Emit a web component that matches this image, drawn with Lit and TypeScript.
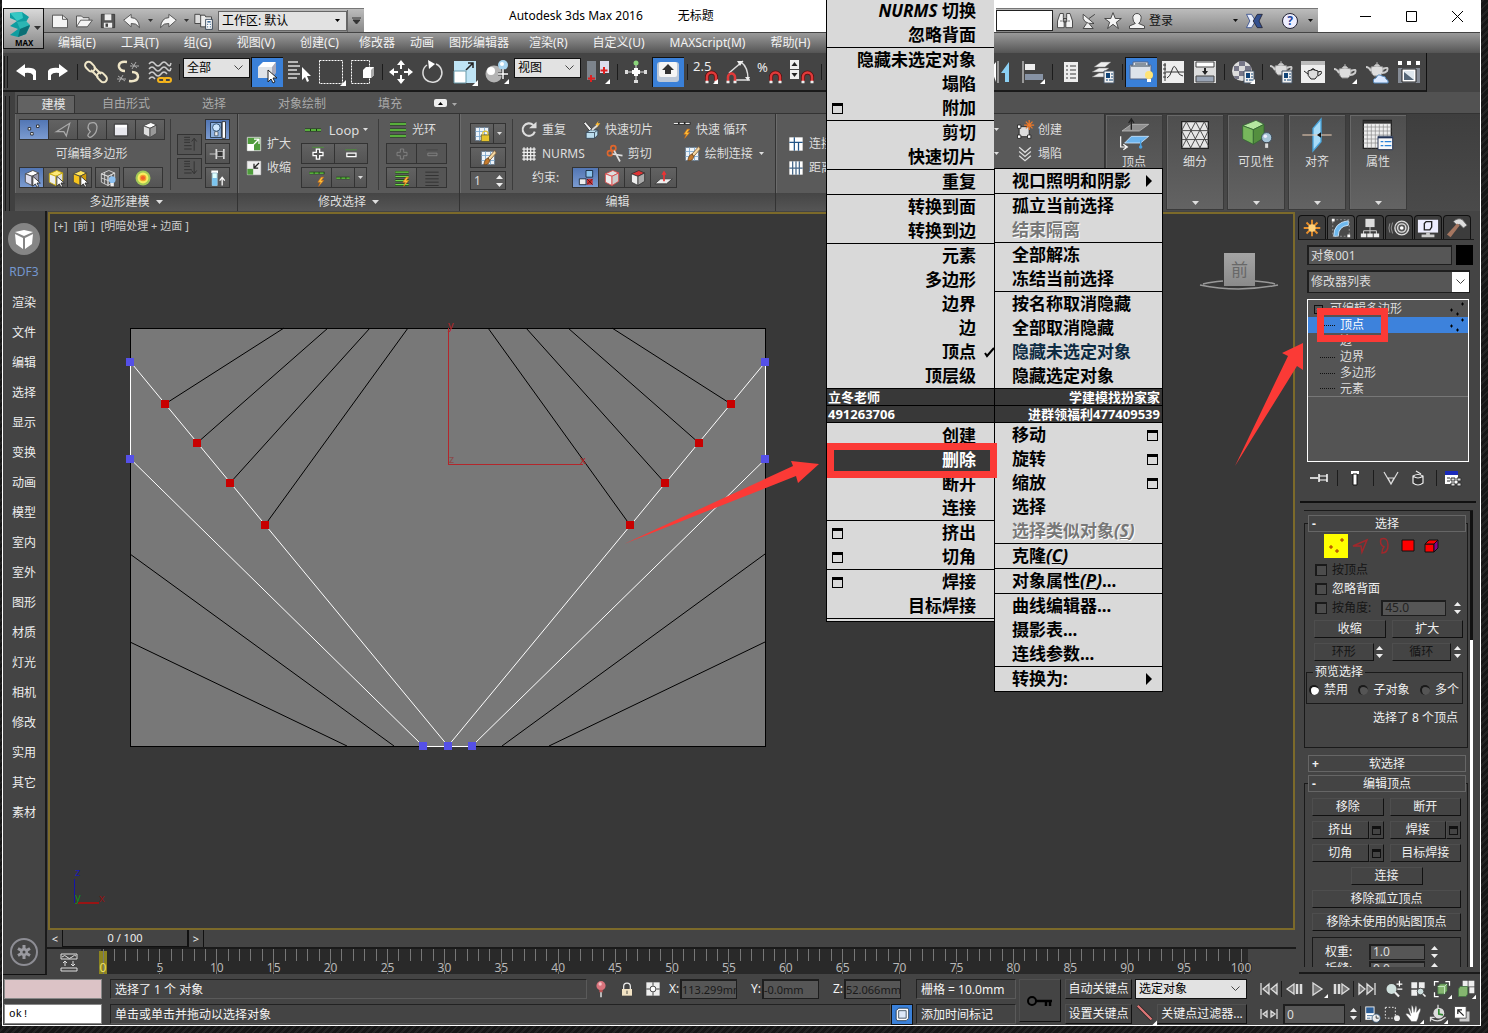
import { LitElement, html, css, svg, nothing } from "lit";
import { customElement } from "lit/decorators.js";
import { classMap } from "lit/directives/class-map.js";

/* ---------- icon drawings on a 24 x 24 grid ---------- */
const magnet = svg`<path d="M13 21v-4a4.500 4.500 0 0 1 9 0v4" fill="none" stroke="#5a1010" stroke-width="4"/><path d="M13 21v-4a4.500 4.500 0 0 1 9 0v4" fill="none" stroke="#e03a3a" stroke-width="2.500"/><path d="M11.500 22h3M20.500 22h3" stroke="#eee" stroke-width="2.500"/>`;
const fly = svg`<path d="M24 19v5h-5z" fill="#fff"/>`;
const pot = svg`<path d="M6 10q6-3 12 0 1 6-3 9H9q-4-3-3-9z" fill="#ddd" stroke="#888"/><path d="M6 14Q4 10 1 10M18 12q6-3 4 2-2 2-5 2" fill="none" stroke="#ccc" stroke-width="2"/><path d="M9 9q3-4 6 0zM12 5v2" fill="#eee" stroke="#aaa"/>`;
const page = svg`<path d="M13 11h10v12H13z" fill="#f2f2f2" stroke="#456"/><path d="M15 13h4v5h-4z" fill="#147"/><path d="M20 14h2M20 17h2M15 20h2M18 20h4" stroke="#147"/>`;
const cursor = svg`<path d="M13 10v12l3-3 2 4 2-1-2-4h4z" fill="#fff" stroke="#222"/>`;
const bolt = svg`<path d="M17 11l-4 6h3l-2 5 6-7h-3l3-4z" fill="#ffc43a" stroke="#d86a10" stroke-width=".7"/>`;
const isoCube = (a: string, b: string, c: string, s = "#444") => svg`<path d="M4 7l9-4 7 3-8 4z" fill="${a}" stroke="${s}"/><path d="M4 7l8 3v11l-8-4z" fill="${b}" stroke="${s}"/><path d="M12 10l8-4v10l-8 5z" fill="${c}" stroke="${s}"/>`;
const grid9 = svg`<path d="M4 4h16v16H4z" fill="#eef4fa" stroke="#567"/><path d="M4 9h16M4 15h16M9 4v16M15 4v16" stroke="#7aa7cf"/>`;

const ICONS: Record<string, unknown> = {
  newdoc: svg`<path d="M3 5h12l6 5v10H3z" fill="#f4f4f4" stroke="#444"/><path d="M15 5v5h6" fill="none" stroke="#444"/>`,
  open: svg`<path d="M3 19V6h6l2 2h7v3" fill="#eee" stroke="#444"/><path d="M3 19l5-8h14l-6 8z" fill="#f4f4f4" stroke="#444"/>`,
  save: svg`<path d="M4 4h16v16H4z" fill="#555" stroke="#333"/><path d="M8 4h8v7H8zM7 14h10v6H7z" fill="#eee"/><path d="M9 15h3v4H9z" fill="#444"/>`,
  undoS: svg`<path d="M2 11l9-7v4q9 0 10 12-4-6-10-5v4z" fill="#f4f4f4" stroke="#444"/>`,
  redoS: svg`<path d="M22 11l-9-7v4q-9 0-10 12 4-6 10-5v4z" fill="#f4f4f4" stroke="#444"/>`,
  project: svg`<path d="M1 4h6l1 2h5v9H1z" fill="#ddd" stroke="#333"/><path d="M8 5h5l1 2h7v12H8z" fill="#eee" stroke="#333"/><path d="M14 10h8v12h-8z" fill="#fff" stroke="#234"/><path d="M16 13h4M16 16h1M19 16h1M16 19h1M19 19h1" stroke="#147" stroke-width="1.500"/>`,
  binoc: svg`<path d="M6 3h4v5l1 3v9H3v-8zM14 3h4l3 9v8h-8v-9l1-3zM10 9h4v4h-4z" fill="#f4f4f4" stroke="#333"/><path d="M6 12h3M15 12h3" stroke="#666"/>`,
  dish: svg`<path d="M5 4q-2 12 13 11z" fill="#f4f4f4" stroke="#333"/><path d="M12 9l7-5M9 15l-4 6h12l-5-6" fill="#eee" stroke="#333"/>`,
  star: svg`<path d="M12 2l2.700 7H22l-6 4.500 2.500 7.500-6.500-5-6.500 5L8 13.500 2 9h7.300z" fill="#f4f4f4" stroke="#333"/>`,
  user: svg`<path d="M7 8a5 5 0 0 1 10 0q0 5-3 7l7 3v3H3v-3l7-3q-3-2-3-7z" fill="#f4f4f4" stroke="#333"/>`,
  exch: svg`<path d="M3 4h6l5 8-5 8H3l4-8z" fill="#e8eefc" stroke="#334a8c"/><path d="M22 4h-6l-5 8 5 8h6l-4-8z" fill="#33508f" stroke="#223"/>`,
  undo: svg`<path d="M2 11l9-7v4q9-1 11 3v9h-3v-5q-2-3-8-2v4z" fill="#fff"/>`,
  redo: svg`<path d="M22 11l-9-7v4q-9-1-11 3v9h3v-5q2-3 8-2v4z" fill="#fff"/>`,
  link: svg`<g fill="none" stroke="#efe6c8" stroke-width="2"><rect x="1" y="3" width="11" height="7" rx="3.500" transform="rotate(45 6 6)"/><rect x="12" y="14" width="11" height="7" rx="3.500" transform="rotate(45 18 18)"/><path d="M7 10l7 7M10 7l7 7"/></g>`,
  unlink: svg`<g fill="none" stroke="#efe6c8" stroke-width="2.500"><path d="M11 2Q2 1 3 7q1 4 6 4M13 21q8 1 9-4 0-5-6-5"/></g><path d="M15 3l6 5M20 2l-4 7M14 6h9M2 16l7 5M7 15l-4 7M1 19h9" stroke="#aaa"/>`,
  bind: svg`<g fill="none" stroke="#ccc" stroke-width="1.500"><path d="M1 4q3-4 6 0t6 0 6 0 4-1M1 9q3-4 6 0t6 0 6 0 4-1M1 14q3-4 6 0t6 0 6 0M1 19q3-4 6 0"/></g><g fill="none" stroke="#f5b41c" stroke-width="2"><rect x="10" y="18" width="7" height="4" rx="2"/><rect x="16" y="18" width="7" height="4" rx="2"/></g>`,
  selobj: svg`<path d="M3 7l5-5h13l-3 5z" fill="#fff"/><path d="M3 7h14v11H3z" fill="#dfe3e8"/><path d="M17 7l4-5v11l-4 5z" fill="#aab"/>${cursor}`,
  byname: svg`<path d="M1 2h10M1 6h12M1 10h9M1 14h12M1 18h9" stroke="#ddd" stroke-width="1.500"/><path d="M15 7v13l3-3 2 5 2-1-2-5h4z" fill="#fff"/>`,
  rect: svg`<path d="M.5 .5h23v23H.5z" fill="none" stroke="#fff" stroke-dasharray="2 1"/><path d="M27 20v6h-6z" fill="#fff"/>`,
  windowc: svg`<path d="M.5 .5h18v23H.5z" fill="none" stroke="#fff" stroke-dasharray="2 1"/><path d="M12 10l3-3h8v8l-3 3h-8z" fill="#fff"/><path d="M20 10l3-3v8l-3 3z" fill="#aaa"/>`,
  move: svg`<path d="M12 0l4 5h-3v4h-2V5H8zM12 24l4-5h-3v-4h-2v4H8zM0 12l5-4v3h4v2H5v3zM24 12l-5-4v3h-4v2h4v3z" fill="#fff"/>`,
  rotate: svg`<path d="M15 4a9.500 9.500 0 1 1-9 1" fill="none" stroke="#ddd" stroke-width="1.500"/><path d="M7 0l7 4-6 5z" fill="#fff"/>`,
  scale: svg`<path d="M1 1h22v22H1z" fill="#bfe4f5"/><path d="M1 11h12v12H1z" fill="#fff" stroke="#69a"/><path d="M13 10l7-7M15 3h5v5" stroke="#222" stroke-width="1.500" fill="none"/><path d="M25 20v6h-6z" fill="#fff"/>`,
  place: svg`<circle cx="9" cy="14" r="8.500" fill="#b4b4b4"/><circle cx="6" cy="11" r="4" fill="#fff"/><circle cx="18" cy="5" r="5" fill="#a8d4ef"/><circle cx="17" cy="4" r="2" fill="#fff"/><path d="M18 9v10M13 14h10" stroke="#333" stroke-width="3"/><path d="M18 9v10M13 14h10" stroke="#fff" stroke-width="1.500"/>${fly}`,
  pivot: svg`<path d="M1 1h9v19H1z" fill="#7d848c"/><path d="M14 1h9v12h-9z" fill="#dde"/><path d="M5 15v7M2 18.500h7M18 7v7M14.500 10.500h7" stroke="#e02020" stroke-width="2"/>${fly}`,
  manip: svg`<path d="M12 3v19M2 12h20" stroke="#ddd"/><path d="M10 8h4v8h-4zM8 10h8v4H8z" fill="#fff"/><circle cx="12" cy="3" r="2.500" fill="#8bd67a"/><path d="M1 10h3v4H1zM20 10h3v4h-3zM10 20h4v3h-4z" fill="#ddd"/>`,
  kbd: svg`<rect x="1" y="2" width="22" height="20" rx="3" fill="#bcc8d8"/><rect x="3" y="2" width="18" height="15" rx="2" fill="#f5f5f5"/><path d="M12 4l6 6h-3v4H9v-4H6z" fill="#333"/>`,
  snap: svg`<text x="-1" y="11" class="gl">2.5</text>${magnet}${fly}`,
  angle: svg`<path d="M3 13L17 1M10 20h14M15 2q7 5 7 17" fill="none" stroke="#ddd" stroke-width="1.500"/><path d="M11 1l6 0-3 5zM19 17h5l-2 4z" fill="#eee"/><path d="M2 21v-4a3.500 3.500 0 0 1 7 0v4" fill="none" stroke="#e03a3a" stroke-width="2.500"/><path d="M.5 22h3M7.500 22h3" stroke="#eee" stroke-width="2.500"/>`,
  percent: svg`<text x="-1" y="12" class="gl">%</text>${magnet}`,
  spin: svg`<path d="M0 0h9v9H0zM0 10h9v9H0z" fill="#eee"/><path d="M1.500 6l3-4 3 4zM1.500 13h6l-3 4z" fill="#222"/>${magnet}`,
  mirror: svg`<path d="M9 1v22" stroke="#eee"/><path d="M1 9l6-7v20l-3-8H1z" fill="#fff"/><path d="M20 2v20h-4v-9h-4z" fill="#8bd0f4"/>`,
  align: svg`<path d="M2 1v22" stroke="#eee"/><path d="M4 4h10v6H4z" fill="#eee"/><path d="M4 14h18v6H4z" fill="#8793a5"/>${fly}`,
  list: svg`<path d="M5 2h14v20H5z" fill="#eee"/><path d="M7 6h2M11 6h6M7 10h2M11 10h6M7 14h2M11 14h6M7 18h2M11 18h6" stroke="#777" stroke-width="1.500"/>`,
  layers: svg`<path d="M3 7l7-5h10l-6 5zM1 12l7-4h10l-5 4zM1 17l7-4h9l-4 4z" fill="#eee" stroke="#777" stroke-width=".5"/>${page}`,
  ribbon: svg`<path d="M1 5h3V2h15v3h3v14H1z" fill="#dde3ea" stroke="#568"/><path d="M2 6h19M6 4h11" stroke="#345"/><circle cx="20" cy="15" r="4" fill="#ffe477"/><path d="M18 19h4v3h-4z" fill="#fff"/>`,
  curve: svg`<path d="M1 1h22v22H1z" fill="#eee"/><path d="M4 3v18M2 5h3M2 9h3M2 13h3M2 17h3M5 12h18M6 18q3-1 5-8 2-7 5 0 2 6 6 6" fill="none" stroke="#333"/>`,
  schem: svg`<path d="M1 1h22v22H1z" fill="#ddd"/><path d="M3 2h18v5H3z" fill="#fff" stroke="#444"/><path d="M3 16h18v6H3z" fill="#99a4b5" stroke="#444"/><path d="M12 8v4" stroke="#222" stroke-width="2"/><path d="M9 11h6l-3 4z" fill="#222"/>`,
  material: svg`<circle cx="11" cy="11" r="10" fill="#ddd"/><path d="M3 6h5v5H3zM8 1h6v5H8zM14 6h6v5h-6zM8 11h6v5H8zM3 16h5v3H4z" fill="#778"/>${page}${fly}`,
  rsetup: svg`<g transform="translate(0 -4)">${pot}</g>${page}`,
  rframe: svg`<path d="M0 1h24v22H0z" fill="#eee"/><path d="M0 1h24v4H0z" fill="#bbb"/><path d="M7 11q5-3 10 0 1 5-3 8h-4q-4-3-3-8zM7 14l-4-3M17 12q5-2 3 2l-3 2M10 10q2-3 4 0" fill="#ddd" stroke="#222"/>`,
  render: svg`<g transform="translate(0 -1)">${pot}</g>${fly}`,
  cloud: svg`<g transform="translate(0 -3)">${pot}</g><path d="M9 23q-2-4 2-5 2-5 6-2 4 0 4 3 3 1 2 4z" fill="#dbe9ff" stroke="#58b"/>`,
  gallery: svg`<path d="M1 1h4v4H1zM10 1h4v4h-4zM19 1h4v4h-4z" fill="#fff"/><path d="M1 8h22v15H1z" fill="#868c96"/><path d="M5 9h14v13H5z" fill="#fff" stroke="#222"/><path d="M7 11h10v9H7z" fill="#dfe8ee"/><path d="M7 20v-8l10 8z" fill="#567"/>`,
  vert: svg`<path d="M5 9h3v3H5zM15 6h3v3h-3zM8 15h3v3H8z" fill="#fff" stroke="#222"/>`,
  edge: svg`<path d="M4 14L20 4l-4 15-3-5z" fill="none" stroke="#aaa" stroke-width="1.500"/>`,
  border: svg`<path d="M9 4q8-3 9 4 0 6-4 10-5 5-7 1 0-2 3-5-5-5-1-10z" fill="none" stroke="#aaa" stroke-width="1.500"/>`,
  poly: svg`<path d="M4 5h16v14H4z" fill="#e8e8ee" stroke="#222"/><path d="M5 6h14v3H5z" fill="#fff"/>`,
  elem: isoCube("#fff", "#ddd", "#999"),
  stk1: svg`<path d="M5 4h7M5 7h7M5 10h7M5 14h9M5 18h9M17 20V6M14 9l3-4 3 4" fill="none" stroke="#333" stroke-width="1.200"/>`,
  stk2: svg`<path d="M5 4h7M5 7h7M5 10h7M5 14h9M5 18h9M17 4v14M14 15l3 4 3-4" fill="none" stroke="#333" stroke-width="1.200"/>`,
  bulb: svg`<path d="M3 3h13v18H3z" fill="#8fb2e0" stroke="#234"/><circle cx="10" cy="9" r="4.500" fill="#cfe8ff" stroke="#246"/><path d="M8 14h4v5H8z" fill="#eee" stroke="#456"/><path d="M17 2h4v20h-4z" fill="#fff" stroke="#222"/>`,
  pin: svg`<path d="M2 12h8" stroke="#ddd"/><path d="M10 6v12M19 6v12" stroke="#ddd" stroke-width="2"/><path d="M11 9h7v6h-7z" fill="#333" stroke="#bbb"/>`,
  tube: svg`<path d="M4 3h8v3H4z" fill="#fff"/><path d="M5 6h6v15H5z" fill="#dff" stroke="#9bc"/><path d="M5 12h6v9H5z" fill="#7bc4ee"/><path d="M17 21v-9M14 15l3-4 3 4" fill="none" stroke="#fff" stroke-width="1.500"/>`,
  cubecur: svg`${isoCube("#fff", "#dde", "#99a")}${cursor}`,
  cubey: svg`${isoCube("#ffe97a", "#eee", "#ddd", "#c9a900")}${cursor}`,
  cubeo: svg`${isoCube("#ffe45a", "#f7c41c", "#cf9a0a")}${cursor}`,
  wire: svg`${isoCube("none", "none", "none", "#ddd")}<path d="M8 5v14M16 8v11M4 12l8 3 8-4" stroke="#ddd" fill="none"/><circle cx="17" cy="14" r="4" fill="#8cc0f0"/><path d="M15 18h4v4h-4z" fill="#eee"/>`,
  soft: svg`<circle cx="12" cy="12" r="9" fill="#a3c957"/><circle cx="12" cy="12" r="6.500" fill="#f8ee60"/><circle cx="12" cy="12" r="4" fill="#f2a02c"/><circle cx="12" cy="12" r="2.500" fill="#f2602c"/>`,
  grow: svg`<path d="M4 4h16v16H4z" fill="#4f9c3c" stroke="#ddd"/><path d="M4 12h8v8H4z" fill="#fff"/><path d="M11 13l7-7M12 6h6v6" stroke="#fff" stroke-width="1.500" fill="none"/>`,
  shrink: svg`<path d="M4 4h16v16H4z" fill="#eee" stroke="#ddd"/><path d="M4 13h7v7H4z" fill="#4f9c3c"/><path d="M18 6l-6 6M12 7v5h5" stroke="#222" stroke-width="1.500" fill="none"/>`,
  dash: svg`<path d="M4 12h16" stroke="#163b10" stroke-width="3"/><path d="M4 12h16" stroke="#6fd64a" stroke-width="1.500" stroke-dasharray="5 1"/>`,
  ring: svg`<path d="M4 6h16M4 12h16M4 18h16" stroke="#163b10" stroke-width="3"/><path d="M4 6h16M4 12h16M4 18h16" stroke="#6fd64a" stroke-width="1.500"/>`,
  plus: svg`<path d="M5 4h14" stroke="#4a9a34"/><path d="M10 6h4v4h4v4h-4v4h-4v-4H6v-4h4z" fill="#555" stroke="#fff" stroke-width="1.500"/>`,
  minus: svg`<path d="M5 7h14" stroke="#4a9a34"/><path d="M7 11h11v4H7z" fill="#555" stroke="#fff" stroke-width="1.500"/>`,
  plusd: svg`<path d="M10 6h4v4h4v4h-4v4h-4v-4H6v-4h4z" fill="none" stroke="#888"/>`,
  minusd: svg`<path d="M5 7h14" stroke="#444"/><path d="M7 11h11v3H7z" fill="none" stroke="#888"/>`,
  dashbolt: svg`<path d="M3 6h18" stroke="#163b10" stroke-width="3"/><path d="M3 6h18" stroke="#6fd64a" stroke-width="1.500" stroke-dasharray="5 1"/>${bolt}`,
  ringbolt: svg`<path d="M4 5h16M4 10h16M4 15h16M4 20h16" stroke="#163b10" stroke-width="3"/><path d="M4 5h16M4 10h16M4 15h16M4 20h16" stroke="#6fd64a" stroke-width="1.500"/>${bolt}`,
  lines: svg`<path d="M4 5h16M4 9h16M4 13h16M4 17h16M4 21h16" stroke="#333" stroke-width="1.200"/>`,
  gridlock: svg`${grid9}<path d="M11 13h10v8H11z" fill="#e5c22d" stroke="#553"/><path d="M13 13v-3q3-3 6 0v3" fill="none" stroke="#e5c22d" stroke-width="1.500"/>`,
  gridpaint: svg`${grid9}<path d="M20 3l-8 9 2 3 8-9z" fill="#f4d7a0" stroke="#753"/><path d="M12 12q-4 1-5 8 6 1 7-5z" fill="#c47a2c" stroke="#642"/>`,
  repeat: svg`<path d="M17 6a7.500 7.500 0 1 0 2 8" fill="none" stroke="#ddd" stroke-width="2.500"/><path d="M12 10h9V2z" fill="#ddd"/>`,
  qslice: svg`<path d="M4 2l8 9-3 2-7-9z" fill="#eee" stroke="#333"/><path d="M5 15l5-3h9v6l-4 4H5z" fill="#bde" stroke="#345"/><path d="M5 15h10v7M15 15l4-3" fill="none" stroke="#345"/><path d="M12 12l7-6" stroke="#ddd" stroke-width="2"/><path d="M20 1l-4 5h3l-2 4 5-6h-3z" fill="#fb3"/>`,
  swift: svg`<path d="M1 4h20" stroke="#222" stroke-width="3"/><path d="M1 4h20" stroke="#eee" stroke-width="1.500" stroke-dasharray="5 2"/>${bolt}`,
  nurms: svg`<path d="M6 4v16M10 4v16M14 4v16M18 4v16M4 6h16M4 10h16M4 14h16M4 18h16" stroke="#eee" stroke-width="1.500"/>`,
  cut: svg`<circle cx="6" cy="11" r="3" fill="none" stroke="#e0662c" stroke-width="2"/><circle cx="10" cy="5" r="3" fill="none" stroke="#e0662c" stroke-width="2"/><path d="M9 12l12 2M11 8l7 13" stroke="#ddd" stroke-width="2"/>`,
  c1: svg`<path d="M12 3h8v8h-8z" fill="#8cc4ee" stroke="#123"/><path d="M4 13h8v7H4z" fill="#eee" stroke="#123"/><path d="M13 13h7v7h-7z" fill="#c33"/><path d="M13 13l7 7M20 13l-7 7" stroke="#511"/>`,
  c2: isoCube("#ddd", "#eee", "#ccc", "#d44"),
  c3: isoCube("#d33", "#eee", "#aaa", "#333"),
  c4: svg`<path d="M1 19l7-6h14l-7 6z" fill="#eee" stroke="#333"/><path d="M12 16V6" stroke="#e33" stroke-width="2"/><path d="M9 8l3-5 3 5z" fill="#e33"/>`,
  gconn: svg`<path d="M4 4h16v16H4z" fill="#fff"/><path d="M10 4v16M4 10h16M15 10v10" stroke="#258" stroke-width="1.500"/>`,
  gdist: svg`<path d="M4 4h16v16H4z" fill="#fff"/><path d="M8 4v16M12 4v16M16 4v16M4 12h16" stroke="#468" stroke-width="1.500"/>`,
  create: svg`<path d="M5 8h12v12H5z" fill="#ddd" stroke="#222"/><path d="M3 6h4v4H3zM3 18h4v4H3zM15 18h4v4h-4z" fill="#fff" stroke="#222"/><path d="M17 0v12M11 6h12M13 2l8 8M21 2l-8 8" stroke="#f07a28" stroke-width="1.500"/>`,
  collapse: svg`<path d="M5 4l7 6 7-6M5 9l7 6 7-6M5 14l7 6 7-6" fill="none" stroke="#ddd" stroke-width="1.500"/>`,
  sun: svg`<path d="M12 3v18M3 12h18M6 6l12 12M18 6L6 18" stroke="#e8902c" stroke-width="2"/><circle cx="12" cy="12" r="4" fill="#ffd27a"/>`,
  arc: svg`<path d="M4 21Q4 6 20 4v5Q9 10 9 21z" fill="#6fb9ee" stroke="#cfe9ff"/><path d="M3 3h18v18H3z" fill="none" stroke="#999" stroke-dasharray="2 2"/><path d="M2 2h3v3H2zM19 19h3v3h-3z" fill="#fff"/>`,
  hier: svg`<path d="M7 2h10v9H7z" fill="#ddd"/><path d="M12 11v4M5 19v-4h14v4M12 15v4" fill="none" stroke="#ddd"/><path d="M2 18h6v4H2zM9 18h6v4H9zM16 18h6v4h-6z" fill="#eee"/>`,
  motion: svg`<circle cx="15" cy="12" r="7.500" fill="#555" stroke="#ddd" stroke-width="1.500"/><circle cx="15" cy="12" r="4.500" fill="none" stroke="#ddd" stroke-width="1.500"/><circle cx="15" cy="12" r="2" fill="#fff"/><path d="M5 6q-3 6 0 12M2 7q-2 5 0 10" fill="none" stroke="#999"/>`,
  display: svg`<path d="M1 3h22v14H1z" fill="#eef"/><path d="M8 7l2-2h6v6l-2 3H8z" fill="none" stroke="#222" stroke-width="1.500"/><path d="M10 17h4v2h5v3H5v-3h5z" fill="#ccc"/>`,
  hammer: svg`<path d="M8 5q5-5 10-2l5 6-4 3-4-4-3 1z" fill="#ddd" stroke="#666"/><path d="M15 9L5 22l-4-3L12 7z" fill="#a57660"/>`,
  mpin: svg`<path d="M3 12h8M12 8v8M20 8v8" stroke="#fff" stroke-width="1.500"/><path d="M12 10h8M12 14h8" stroke="#fff" stroke-width="1.200"/>`,
  mtube: svg`<path d="M8 5h8v3H8z" fill="#fff"/><path d="M10 8h4v11h-4z" fill="#fff" stroke="#111"/>`,
  unique: svg`<path d="M5 6l7 12 7-12M9 12h6l-3 6z" fill="none" stroke="#ddd" stroke-width="1.200"/>`,
  trash: svg`<path d="M7 10q5-3 10 0v7q-5 4-10 0zM7 10q5 4 10 0M10 5l5 3" fill="#333" stroke="#eee" stroke-width="1.200"/>`,
  config: svg`<path d="M3 5h13v13H3z" fill="#fff"/><path d="M3 5h13v4H3z" fill="#1b2bbb"/><path d="M5 12h3M5 15h3" stroke="#333"/><path d="M9 12h4v3H9zM15 12h4v3h-4zM9 17h4v3H9zM15 17h4v3h-4z" fill="#ddd" stroke="#333"/>`,
  yv: svg`<path d="M5 13h4M7 11v4M16 6h4M18 4v4M11 17h4M13 15v4" stroke="#a52a00"/>`,
  redge: svg`<path d="M5 12l14-6-5 12-1-6z" fill="none" stroke="#a0282c" stroke-width="1.500"/>`,
  rborder: svg`<path d="M9 5q7-2 7 6 0 8-6 8 0-4 2-6-5-3-3-8z" fill="none" stroke="#a0282c" stroke-width="1.500"/>`,
  rpoly: svg`<path d="M6 6h12v11H6z" fill="#f00" stroke="#111"/>`,
  relem: svg`<path d="M5 10h9v8H5z" fill="#f00" stroke="#111"/><path d="M5 10l4-4h9l-4 4z" fill="#f00" stroke="#111"/><path d="M14 10l4-4v8l-4 4z" fill="#808" stroke="#111"/>`,
  curves: svg`<path d="M4 4h16v5H4zM4 18h16v3H4z" fill="none" stroke="#ddd"/><path d="M5 7q3-3 5 0t5 0 4-1M8 16v-5M6 13l2-2 2 2M16 11v5M14 14l2 2 2-2" fill="none" stroke="#ddd"/>`,
  rpin: svg`<circle cx="12" cy="8" r="5.500" fill="#d9737c"/><circle cx="11" cy="6" r="2" fill="#f6c0c4"/><path d="M10 13h4v3h-4z" fill="#b55"/><path d="M12 16v6" stroke="#fff" stroke-width="1.500"/>`,
  lock: svg`<path d="M8 12V9a4 4 0 0 1 8 0v3" fill="none" stroke="#eee" stroke-width="1.500"/><path d="M6 12h12v8H6z" fill="#f3e3c4"/><path d="M12 14v4" stroke="#333"/>`,
  absrel: svg`<path d="M4 4h16v16H4z" fill="#eee"/><circle cx="12" cy="12" r="3.500" fill="#fff" stroke="#222"/><path d="M12 4v4M12 16v4M4 12h4M16 12h4" stroke="#222"/>`,
  adapt: svg`<path d="M5 8l3-3h11l1 2v10l-3 3H6l-1-2z" fill="#fff" stroke="#234"/><path d="M8 8h9v9H8z" fill="#dde8f8" stroke="#345"/>`,
  key: svg`<circle cx="4" cy="12" r="4" fill="none" stroke="#000" stroke-width="2"/><path d="M8 12h16M18 12v5M22 12v5" stroke="#000" stroke-width="2.500"/>`,
  tangent: svg`<path d="M3 3l15 15" stroke="#222" stroke-width="4"/><path d="M3 3l15 15" stroke="#d77" stroke-width="2.500"/>${fly}`,
  first: svg`<path d="M4 6v12M12 7l-6 5 6 5zM20 7l-6 5 6 5z" fill="#777" stroke="#ddd" stroke-width="1.300"/>`,
  prev: svg`<path d="M11 7l-7 5 7 5z" fill="#777" stroke="#ddd" stroke-width="1.300"/><path d="M14 7v10M18 7v10" stroke="#ddd" stroke-width="2.500"/>`,
  play: svg`<path d="M7 6l9 6-9 6z" fill="#777" stroke="#ddd" stroke-width="1.300"/><path d="M22 17v4h-4z" fill="#fff"/>`,
  next: svg`<path d="M13 7l7 5-7 5z" fill="#777" stroke="#ddd" stroke-width="1.300"/><path d="M6 7v10M10 7v10" stroke="#ddd" stroke-width="2.500"/>`,
  last: svg`<path d="M20 6v12M12 7l6 5-6 5zM4 7l6 5-6 5z" fill="#777" stroke="#ddd" stroke-width="1.300"/>`,
  keymode: svg`<path d="M4 7v10M20 7v10M10 9l-4 3 4 3zM14 9l4 3-4 3z" fill="#777" stroke="#ddd" stroke-width="1.300"/>`,
  zoom: svg`<circle cx="9" cy="12" r="6" fill="#cfe0dd"/><path d="M13 16l5 5" stroke="#eee" stroke-width="2.500"/><path d="M15 6h7M18.500 2v7M16 12h6" stroke="#fff" stroke-width="1.500"/>`,
  zoomall: svg`<path d="M4 4h7v7H4zM13 4h7v7h-7zM4 13h7v7H4z" fill="#eee"/><circle cx="15" cy="15" r="4" fill="#cdd" stroke="#444"/><path d="M18 18l3 3" stroke="#eee" stroke-width="2"/>`,
  extents: svg`<path d="M3 8V3h5M16 3h5v5M3 16v5h5" fill="none" stroke="#fff" stroke-width="1.500"/><path d="M7 9l3-3h8v8l-3 4H7z" fill="#84b56f" stroke="#474"/><path d="M7 9h8v9M15 9l3-3" fill="none" stroke="#cec"/>${fly}`,
  extall: svg`<path d="M8 2h6v7H8zM15 2h7v7h-7zM16 10h6v7h-6z" fill="#eee"/><path d="M3 12l2-3h9v9l-2 3H3z" fill="#84b56f" stroke="#474"/>${fly}`,
  timecfg: svg`<path d="M4 3h11v16H4z" fill="#fff"/><path d="M5 4h9v7H5z" fill="#2b5d96"/><path d="M6 14h7M6 17h4" stroke="#258"/><circle cx="17" cy="17" r="5" fill="#eee" stroke="#357"/><path d="M17 14v3h3" fill="none" stroke="#222"/>`,
  region: svg`<path d="M4 4h12v13H4z" fill="none" stroke="#fff" stroke-dasharray="2 2"/><circle cx="18" cy="17" r="3.500" fill="#eee"/>`,
  hand: svg`<path d="M9 21q-4-5-7-9 2-2 6 2L5 5q2-1 4 6L9 2q2-1 3 8l2-8q2 0 1 8l4-5q2 1-1 7-1 6-3 9z" fill="#fff" stroke="#555" stroke-width=".5"/>${fly}`,
  orbit: svg`<circle cx="13" cy="11" r="6.500" fill="#ddd"/><path d="M13 6v6l5 1" stroke="#383" stroke-width="2" fill="none"/><path d="M3 17q9 7 18-1M3 21v-5h5M12 1v4" fill="none" stroke="#ddd" stroke-width="1.500"/>${fly}`,
  maxvp: svg`<path d="M9 9h12v12H9z" fill="#ccc"/><path d="M3 3h14v14H3z" fill="#fff" stroke="#444"/><path d="M14 14L7 7M7 12V7h5" fill="none" stroke="#222" stroke-width="1.500"/>`,
  bigvert: svg`<path d="M3 9l7-5h13l-7 5z" fill="#8f8f8f" stroke="#bbb" stroke-width=".6"/><path d="M5 18l5-5h13l-6 5z" fill="#6cb4ee" stroke="#cfe9ff" stroke-width=".6"/><path d="M10 8V1M8 3l2-3 2 3" fill="none" stroke="#222"/><path d="M2 13v8h4M4 19l3 2-3 2" fill="none" stroke="#fff" stroke-width=".9"/><path d="M17 16v5" stroke="#4ba0e0"/><circle cx="17" cy="21" r="1.300" fill="#4ba0e0"/>`,
  bigtess: svg`<path d="M2 2h20v20H2z" fill="#e6e6e6" stroke="#222"/><path d="M2 8.700h20M2 15.400h20M5.500 2L2 8.700l7 13.300M12.500 2L5.500 15.400 2 22M5.500 2l10.500 20M19 2L8.500 22M12.500 2L22 20M22 8.700L15.500 22M19 2l3 6.700" fill="none" stroke="#444" stroke-width=".7"/>`,
  bigvis: svg`<path d="M2 5l10-4 6 3-8 4z" fill="#b5e6a0" stroke="#363" stroke-width=".6"/><path d="M2 5l8 3v11l-8-4z" fill="#77b85c" stroke="#363" stroke-width=".6"/><path d="M10 8l8-4v10l-8 5z" fill="#548f3f" stroke="#363" stroke-width=".6"/><circle cx="20" cy="14" r="3.800" fill="#a7c5d8" stroke="#345" stroke-width=".6"/><circle cx="19" cy="13" r="1.300" fill="#eef"/><path d="M18.500 18h3v4h-3z" fill="#ddd" stroke="#444" stroke-width=".6"/>`,
  bigalign: svg`<path d="M9 7l6-7v17l-6 7z" fill="#a8dcf8" stroke="#4aa5dc"/><path d="M1 12h22" stroke="#e9cdb4" stroke-width=".8"/><path d="M15 10l-3 2 3 2z" fill="#111"/>`,
  bigprop: svg`<path d="M1 1h21v21H1z" fill="#eee" stroke="#222"/><path d="M1 2.500h21" stroke="#333" stroke-width="2"/><path d="M1 6h21M1 9h21M1 12h21M1 15h21M1 18h21M4 4v18M7 4v18M10 4v18M13 4v18M16 4v18M19 4v18" stroke="#888" stroke-width=".5"/><path d="M12 13h11v10H12z" fill="#f8f8f8" stroke="#235" stroke-width=".7"/><path d="M12 14h11" stroke="#235"/><path d="M14 17h2M17 17h5M14 20h2M17 20h5" stroke="#2a82d8"/>`,
};

const ico = (n: string, s = 24) => html`<svg class="ico" width=${s} height=${s} viewBox="0 0 24 24" aria-hidden="true">${ICONS[n]}</svg>`;
const caret = html`<svg class="ico" width="7" height="4" viewBox="0 0 7 4" aria-hidden="true"><path d="M0 0h7L3.500 4z" fill="currentColor"/></svg>`;
const smallCaret = html`<svg class="ico" width="5" height="3" viewBox="0 0 5 3" aria-hidden="true"><path d="M0 0h5L2.500 3z" fill="currentColor"/></svg>`;
const chev = html`<svg class="ico chev" width="9" height="6" viewBox="0 0 9 6" aria-hidden="true"><path d="M.5 .5l4 4 4-4" fill="none" stroke="#444"/></svg>`;

const reset = css`
  * { box-sizing: border-box; }
  button, input, select { font: inherit; color: inherit; border: 0; padding: 0; margin: 0; background: none; border-radius: 0; min-width: 0; }
  button { display: inline-flex; align-items: center; justify-content: center; white-space: nowrap; }
  .ico { display: block; flex: none; overflow: visible; }
`;

type Item = { t: string; k?: string; tail?: string; box?: boolean; off?: boolean; on?: boolean; check?: boolean; sub?: boolean; navy?: boolean; pre?: string };
const it = (t: string, o: Partial<Item> = {}): Item => ({ t, ...o });

@customElement("quad-menu")
class QuadMenu extends LitElement {
  static styles = [reset, css`
    :host { display: grid; grid-template-columns: 168px 169px; font: bold 17px/24px "Noto Sans", "Noto Sans CJK SC", sans-serif; color: #000; }
    .quad { background: #d9d9d9; border-left: 1px solid #000; }
    .tl { align-self: end; }
    .tr { align-self: end; border-top: 1px solid #000; border-right: 1px solid #000; }
    .bl { align-self: start; padding: 1px 0 2px; border-bottom: 1px solid #000; }
    .br { align-self: start; border-right: 1px solid #000; }
    .group { border-bottom: 1px solid #000; }
    .item { display: flex; align-items: center; width: 100%; height: 24px; gap: 6px; padding: 0 4px 0 17px; justify-content: space-between; }
    .tl .item, .bl .item { flex-direction: row-reverse; padding: 0 3px 0 5px; }
    .tl .label, .bl .label { margin-right: 15px; }
    .tl .checked { flex-direction: row; justify-content: flex-end; gap: 8px; padding-right: 0; }
    .tl .checked .label { margin-right: 0; }
    i { font-style: italic; }
    .off { color: #777; text-shadow: 1px 1px #fff; }
    .navy { color: #0d2b42; }
    .on { background: #383838; color: #fff; }
    .opt { width: 11px; height: 11px; border: 1px solid #000; border-top-width: 3px; }
    .arrow { margin-right: 6px; }
    .title { height: 17px; border-bottom: 1px solid #000; border-left: 1px solid #000; background: #383838; color: #fff; font-size: 13px; line-height: 16px; padding: 0 2px 0 1px; overflow: hidden; white-space: nowrap; }
    .r { text-align: right; border-right: 1px solid #000; }
  `];
  item(x: Item) {
    return html`<button class=${classMap({ item: true, off: !!x.off, on: !!x.on, navy: !!x.navy, checked: !!x.check })} ?disabled=${x.off}>
      <span class="label">${x.pre ? html`<i>${x.pre}</i> ` : nothing}${x.t}${x.k ? html`<i>(<u>${x.k}</u>)</i>` : nothing}${x.tail ?? nothing}</span>
      ${x.box ? html`<span class="opt"></span>` : nothing}
      ${x.sub ? html`<svg class="ico arrow" width="6" height="12" viewBox="0 0 6 12"><path d="M0 0l6 6-6 6z"/></svg>` : nothing}
      ${x.check ? html`<svg class="ico" width="10" height="10" viewBox="0 0 10 10"><path d="M1 6l2 3 7-8" fill="none" stroke="#000" stroke-width="2"/></svg>` : nothing}
    </button>`;
  }
  quad(cls: string, groups: Item[][]) {
    return html`<div class="quad ${cls}">${groups.map(g => html`<div class="group">${g.map(x => this.item(x))}</div>`)}</div>`;
  }
  render() {
    return html`
      ${this.quad("tl", [[it("切换", { pre: "NURMS" }), it("忽略背面")], [it("隐藏未选定对象"), it("塌陷"), it("附加", { box: true })], [it("剪切"), it("快速切片")], [it("重复")], [it("转换到面"), it("转换到边")],
        [it("元素"), it("多边形"), it("边界"), it("边"), it("顶点", { check: true }), it("顶层级")]])}
      ${this.quad("tr", [[it("视口照明和阴影", { sub: true })], [it("孤立当前选择"), it("结束隔离", { off: true })], [it("全部解冻"), it("冻结当前选择")],
        [it("按名称取消隐藏"), it("全部取消隐藏"), it("隐藏未选定对象", { navy: true }), it("隐藏选定对象")]])}
      <div class="title">立冬老师</div><div class="title r">学建模找扮家家</div>
      <div class="title">491263706</div><div class="title r">进群领福利477409539</div>
      ${this.quad("bl", [[it("创建"), it("删除", { on: true }), it("断开"), it("连接")], [it("挤出", { box: true }), it("切角", { box: true })], [it("焊接", { box: true }), it("目标焊接")]])}
      ${this.quad("br", [[it("移动", { box: true }), it("旋转", { box: true }), it("缩放", { box: true }), it("选择"), it("选择类似对象", { k: "S", off: true })], [it("克隆", { k: "C" })], [it("对象属性", { k: "P", tail: "..." })],
        [it("曲线编辑器..."), it("摄影表..."), it("连线参数...")], [it("转换为:", { sub: true })]])}`;
  }
}

@customElement("app-root")
class AppRoot extends LitElement {
  static styles = [reset, css`
    :host { display: block; box-sizing: border-box; height: 100vh; padding: 0 7px 7px 2px; overflow: hidden; position: relative; background: repeating-linear-gradient(135deg, #161616 0 3px, #242424 3px 5px); font: 12px/16px "Noto Sans", "Noto Sans CJK SC", sans-serif; color: #e6e6e6; }
    .window { display: flex; flex-direction: column; height: 100%; border: 1px solid #fff; border-top: 0; background: #444; white-space: nowrap; }
    .gl { font: 13px "Noto Sans", sans-serif; fill: #eee; }
    .row { display: flex; align-items: center; }
    .grow { flex: 1; min-width: 0; }

    .title { display: flex; height: 32px; flex: none; background: #fff; color: #000; align-items: flex-end; padding-left: 41px; }
    .bar { display: flex; align-items: center; height: 24px; background: linear-gradient(#bcbcbc, #888); border-top: 1px solid #777; color: #333; }
    .bar button { width: 24px; height: 22px; }
    .bar .sm { width: 12px; }
    .quick { width: 320px; padding-left: 4px; }
    .dd { display: inline-grid; align-items: center; color: #000; }
    .dd > * { grid-area: 1 / 1; }
    .dd select { appearance: none; width: 100%; height: 100%; padding-left: 3px; background: #e2e2e2; }
    .dd .ico { justify-self: end; margin-right: 6px; pointer-events: none; }
    .work { width: 129px; height: 20px; border: 1px solid #666; margin-left: auto; }
    .bar .expand { width: 17px; border-left: 1px solid #666; }
    .name { display: flex; gap: 35px; width: 632px; height: 32px; align-items: center; padding-left: 145px; }
    .info { width: 322px; color: #111; }
    .info input { width: 57px; height: 21px; background: #fff; border: 1px solid #222; }
    .info .login { width: auto; flex: 1; justify-content: flex-start; }
    .help { width: 16px; height: 16px; border: 1px solid #223; border-radius: 50%; background: #eef; color: #24459c; font-weight: bold; text-align: center; line-height: 14px; }
    .info .last { width: 16px; }
    .win { margin-left: auto; align-self: center; display: flex; }
    .win button { width: 46px; height: 30px; }
    .app { position: absolute; left: 3px; top: 8px; width: 41px; height: 41px; background: linear-gradient(#d8d8d8, #888); border: 1px solid #111; color: #111; }
    .max { font: bold 8px "Noto Sans", sans-serif; }

    .menu { display: flex; flex: none; height: 21px; align-items: center; gap: 1px; background: linear-gradient(#9a9a9a, #555); border-top: 1px solid #444; padding-left: 43px; color: #f2f2f2; }
    .menu button { padding: 0 12px; }
    .menu .n { padding: 0 7px; }

    .tools { flex: none; display: flex; height: 39px; background: #444; }
    .tools .strip { display: flex; align-items: center; border-right: 1px solid #111; border-bottom: 2px solid #1a1a1a; padding: 0 1px; height: 39px; }
    .grip { width: 4px; height: 32px; border: solid #1a1a1a; border-width: 0 1px; margin-right: 2px; }
    .tools button { width: 32px; height: 30px; }
    .tools .act { background: #3a80d8; box-shadow: inset 1px 1px #111; }
    .sep { width: 1px; height: 16px; background: #1c1c1c; margin: 0 2px 0 3px; flex: none; }
    .tools .dd { width: 67px; height: 20px; margin: 5px 1px 0; align-self: flex-start; border: 1px solid #111; }
    .gap { width: 161px; }

    .ribbon { flex: none; display: flex; height: 119px; background: #404040; }
    .rgrip { width: 5px; margin: 4px 3px 0 2px; border: solid #1a1a1a; border-width: 0 1px; }
    .rmain { flex: 1; min-width: 0; margin-left: 2px; }
    .tabs { display: flex; height: 21px; background: #525252; align-items: flex-end; color: #aaa; }
    .tabs button { width: 88px; height: 18px; }
    .tabs .cur { width: 58px; margin: 0 7px 0 2px; border: 1px solid #333; border-bottom: 0; background: #626262; color: #e6e6e6; padding-left: 15px; }
    .tabs .mini { width: 13px; height: 8px; border-radius: 2px; background: #eee; color: #222; margin-bottom: 6px; }
    .tabs .drop { width: 14px; }
    .panels { display: flex; height: 98px; border-top: 1px solid #333; background: linear-gradient(#3e3e3e, #4a4a4a); color: #dedede; }
    .pan { display: flex; flex-direction: column; flex: none; background: #5a5a5a; border-right: 1px solid #333; box-shadow: inset 1px 0 #6c6c6c; }
    .pb { display: flex; flex: 1; padding: 5px 4px 0; }
    .pf { display: flex; gap: 6px; align-items: center; justify-content: center; height: 18px; background: linear-gradient(#454545, #555); }
    .p1 { width: 223px; } .p2 { width: 222px; } .p3 { width: 316px; } .p4 { width: 329px; }
    .col { display: flex; flex-direction: column; gap: 3px; }
    .col > .row { height: 21px; }
    .b { height: 21px; border: 1px solid #333; background: linear-gradient(#626262, #545454); margin-right: -1px; }
    .b.act { background: linear-gradient(#5276b4, #7b9bd0); }
    .b.off { background: #555; }
    .w13 { width: 13px; } .w24 { width: 24px; } .w25 { width: 25px; } .w27 { width: 27px; } .w30 { width: 30px; } .w31 { width: 31px; } .w34 { width: 34px; } .w36 { width: 36px; } .w40 { width: 40px; }
    .vs { width: 1px; background: #3c3c3c; margin: 0 6px; height: 71px; }
    .cc { justify-content: center; }
    .txt { gap: 3px; }
    .grs { width: 59px; align-items: flex-start; padding-left: 2px; }
    .loop { font-size: 13px; }
    .loop span { width: 38px; text-align: center; }
    .vs2 { margin: 0 7px 0 10px; }
    .s4 { width: 4px; } .s6 { width: 6px; } .s12 { width: 12px; } .s16 { width: 16px; } .s20 { width: 20px; } .s30 { width: 30px; }
    .iter { padding: 4px 0 0 6px; }
    .cons { width: 53px; text-align: center; }
    .spin { width: 36px; height: 19px; border: 1px solid #333; display: flex; }
    .spin input { flex: 1; padding-left: 3px; width: 20px; }
    .sp { display: grid; width: 12px; flex: none; place-items: center; height: 100%; }
    .tl8 { gap: 2px; }
    .p4c { padding-left: 6px; }
    .p4r { margin-left: auto; width: 106px; }
    .big { flex-direction: column; justify-content: flex-start; width: 58px; margin-right: 3px; height: 96px; padding-top: 4px; gap: 3px; background: linear-gradient(#4e4e4e, #636363); flex: none; border: 1px solid #3a3a3a; box-shadow: inset 1px 1px #686868; }
    .big .car { margin-top: auto; padding-bottom: 4px; }

    .body { flex: 1; min-height: 0; display: grid; grid-template-columns: 44px 1fr 184px; }
    .side { display: flex; flex-direction: column; align-items: center; border-right: 2px solid #1a1a1a; border-bottom: 1px solid #111; padding: 11px 0 7px; color: #eee; }
    .side button { height: 30px; width: 100%; }
    .side .logo { height: 34px; }
    .side .ver { color: #7497cf; height: 32px; }
    .side .gear { margin-top: auto; }
    .center { display: flex; flex-direction: column; min-width: 0; min-height: 0; }
    .vp { flex: 1; min-height: 0; margin: 1px 1px 0 1px; border: 2px solid #7c6a2a; background: #383838; overflow: hidden; position: relative; }
    .vlabel { display: flex; gap: 6px; padding: 4px; font-size: 11px; color: #ccc; height: 24px; }
    .scene { position: absolute; left: 0; top: 0; pointer-events: none; }
    .axis { font: 11px "Noto Sans", sans-serif; }
    .cube { position: absolute; right: 38px; top: 39px; width: 31px; height: 33px; background: linear-gradient(#a5a5a5, #8a8a8a); color: #686868; font-size: 17px; display: grid; place-items: center; }
    .ringv { position: absolute; right: 14px; top: 64px; }
    .slider { display: flex; height: 19px; border-bottom: 2px solid #1a1a1a; color: #eee; font-size: 11px; padding-left: 1px; }
    .slider button { width: 15px; border-right: 1px solid #111; }
    .slider .thumb { width: 126px; border-right: 2px solid #111; border-bottom: 1px solid #111; }
    .track { display: flex; height: 25px; margin-bottom: 1px; }
    .track .tc { width: 54px; padding-right: 10px; }
    .ruler { flex: 1; background: #292929; margin-right: 48px; padding: 0 7px 0 2px; }
    .ruler svg { display: block; width: 100%; height: 25px; overflow: visible; }
    .tk { font: 12px "Noto Sans", sans-serif; fill: #b8b8b8; text-anchor: middle; }
    .tk.now { fill: #eee060; stroke: none; }

    .cmd { display: flex; flex-direction: column; min-height: 0; overflow: hidden; padding: 4px 10px 0 11px; color: #f0f0f0; }
    .ctabs { display: flex; gap: 1px; margin: 0 -4px 0 -9px; border-bottom: 1px solid #1a1a1a; flex: none; }
    .ctabs button { width: 28px; height: 24px; border: 1px solid #111; border-bottom: 0; border-radius: 4px 4px 0 0; background: #3c3c3c; }
    .ctabs .cur { background: #4a4a4a; }
    .nm { display: flex; gap: 4px; margin: 5px -3px 0 0; height: 20px; flex: none; }
    .fld { background: #565656; border: solid #1e1e1e; border-width: 2px 1px 1px 2px; padding-left: 2px; color: #ddd; }
    .nm .fld { flex: 1; }
    .nm .sw { width: 17px; background: #000; }
    .mods { display: grid; margin-top: 5px; height: 23px; flex: none; align-items: center; border: solid #1e1e1e; border-width: 2px 1px 1px 2px; background: #565656; color: #ddd; }
    .mods > * { grid-area: 1 / 1; }
    .mods select { appearance: none; height: 100%; padding-left: 2px; }
    .mods .btn { justify-self: end; width: 17px; height: 100%; background: #fff; display: grid; place-items: center; pointer-events: none; }
    .stack { margin: 6px 1px 0 0; height: 163px; border: 1px solid #fff; flex: none; padding-top: 1px; background: #545454; }
    .stack button { display: flex; justify-content: flex-start; width: 100%; height: 16px; padding: 0 2px 0 6px; color: #ddd; }
    .stack .sel { background: #3d82dc; color: #fff; }
    .stack .ex { width: 9px; height: 9px; border: 1px solid #111; margin-right: 7px; line-height: 6px; }
    .stack .dots { width: 15px; border-bottom: 1px dotted #111; margin: 0 5px 0 6px; }
    .stack .ico { margin-left: auto; }
    .stack .end { border-bottom: 1px solid #777; }
    .sbtn { display: flex; align-items: center; gap: 3px; margin-top: 5px; height: 22px; flex: none; }
    .hr { height: 2px; background: #111; margin: 12px -6px 7px -7px; flex: none; }
    .roll { flex: 1; min-height: 0; overflow: hidden; display: flex; border-top: 1px solid #1a1a1a; margin: 0 -3px; }
    .rc { flex: 1; min-width: 0; padding-top: 4px; }
    .sb { width: 3px; margin-left: 2px; background: linear-gradient(#111 0 129px, #fff 129px); }
    .rh { position: relative; display: flex; height: 17px; width: calc(100% - 6px); margin-left: 4px; border: 1px solid #666; background: #444; }
    .rh b { position: absolute; left: 3px; }
    .rgap { height: 3px; }
    .rb { border: 1px solid #1a1a1a; margin-top: -9px; padding: 10px 4px 0 9px; }
    .s1 { height: 225px; margin-bottom: 7px; }
    .s2 { padding: 14px 6px 0 7px; }
    .subs { display: flex; margin-left: 10px; height: 26px; }
    .subs button { width: 24px; height: 24px; }
    .subs .y { background: #ff0; }
    .ck { display: flex; align-items: center; gap: 5px; height: 19px; padding-left: 1px; }
    .ck label { display: flex; align-items: center; gap: 5px; }
    .ck input[type="checkbox"] { appearance: none; width: 12px; height: 12px; border: solid #1a1a1a; border-width: 2px 1px 1px 2px; background: #4c4c4c; }
    .dis { color: #151515; }
    .num { height: 16px; width: 66px; color: #222; }
    .two { display: grid; grid-template-columns: 1fr 1fr; gap: 5px 6px; margin-top: 3px; }
    .two > * { display: flex; height: 18px; }
    .s2 .two { gap: 4px 6px; margin: 0; grid-auto-rows: 19px; }
    .k { flex: 1; height: 18px; border: 1px solid #4e4e4e; border-right-color: #111; border-bottom-color: #111; }
    .k.sq { flex: none; width: 15px; }
    .sq i { width: 9px; height: 9px; border: 1px solid #111; border-top-width: 3px; }
    .full { grid-column: 1 / -1; justify-content: center; }
    .full .mid { flex: none; width: 72px; }
    fieldset { margin: 3px 0 0 -8px; padding: 0 3px 0 2px; border: 1px solid #1a1a1a; height: 40px; min-width: 0; }
    legend { padding: 0 2px; margin-left: 4px; }
    .rad { display: flex; justify-content: space-between; padding-top: 2px; }
    .rad label { display: flex; gap: 5px; align-items: center; }
    .rad input { appearance: none; width: 10px; height: 10px; border: solid #1a1a1a; border-width: 2px 0 0 2px; border-radius: 50%; background: #555; }
    .rad input:checked { background: #fff; }
    .count { text-align: right; padding: 6px 5px 0 0; }
    .wbox { border: 1px solid #1a1a1a; margin-top: 5px; padding: 5px 8px 0 12px; height: 80px; }
    .wbox .row { height: 17px; }
    .wbox label { width: 44px; }
    .wbox input { width: 56px; height: 16px; flex: none; margin-right: 3px; }
    .foot { flex: none; height: 7px; border-bottom: 2px solid #1a1a1a; margin: 0 -10px 1px -8px; }

    .status { flex: none; display: flex; height: 50px; padding: 4px 2px 0 1px; color: #f4f4f4; }
    .two-r { display: grid; grid-template-rows: 20px 20px; gap: 5px; }
    .lis { width: 98px; margin-right: 8px; }
    .lis input { width: 100%; background: #fff; border: 1px solid #888; color: #000; font: 11px "Liberation Mono", monospace; padding-left: 4px; }
    .lis .pink { background: #dcc3c6; }
    .sbx { border: 1px solid #5a5a5a; border-top-color: #222; border-left-color: #222; padding: 1px 4px; overflow: hidden; flex: 1; height: 20px; line-height: 18px; }
    .ics { display: flex; width: 82px; padding-left: 1px; }
    .ics button { width: 26px; }
    .xyz { display: flex; gap: 14px; width: 244px; }
    .xyz label { display: flex; align-items: center; width: 68px; justify-content: space-between; }
    .xyz input { width: 57px; height: 20px; color: #1a1a1a; padding-left: 0; font-size: 11px; }
    .actb { width: 22px; height: 21px; background: #3a80d8; border: 1px solid #111; }
    .gr { width: 100px; margin: 0 3px; }
    .kb { border: 1px solid #505050; border-right-color: #111; border-bottom-color: #111; }
    .bigkey { width: 42px; height: 43px; }
    .auto { width: 67px; margin: 0 3px 0 4px; }
    .filt { width: 112px; }
    .filt .dd { height: 20px; border: 1px solid #111; }
    .filt .row .kb { flex: 1; height: 20px; }
    .play { margin-left: 10px; flex: none; }
    .play button { width: 23px; height: 20px; }
    .play .sep { margin: 0 1px; }
    .play .fld { width: 62px; height: 20px; margin: 0 2px 0 3px; }
    .play .nv { width: 24px; }
    .play .nx { width: 20px; }
    .over { position: absolute; left: 0; top: 0; pointer-events: none; }
    quad-menu { position: absolute; left: 826px; top: -1px; }
  `];

  b(n: string, w = "w30", cls = "", s = 20) { return html`<button class="b ${w} ${cls}" aria-label=${n}>${ico(n, s)}</button>`; }
  t(n: string, cls = "", s = 24) { return html`<button class=${cls} aria-label=${n}>${ico(n, s)}</button>`; }
  spinArrows() { return html`<span class="sp"><svg class="ico" width="7" height="12" viewBox="0 0 7 12"><path d="M0 4l3.500-4L7 4zM0 8h7l-3.500 4z" fill="#eee"/></svg></span>`; }
  dd(label: string, v: string) { return html`<span class="dd"><select aria-label=${label}><option>${v}</option></select>${chev}</span>`; }

  titleBar() {
    return html`<header class="title">
      <div class="bar quick">${this.t("newdoc", "", 20)}${this.t("open", "", 20)}${this.t("save", "", 20)}${this.t("undoS", "", 20)}<button class="sm" aria-label="undo list">${smallCaret}</button>${this.t("redoS", "", 20)}<button class="sm" aria-label="redo list">${smallCaret}</button>${this.t("project", "", 20)}
        <span class="dd work"><select aria-label="工作区"><option>工作区: 默认</option></select>${smallCaret}</span><button class="expand" aria-label="more"><svg class="ico" width="9" height="7" viewBox="0 0 9 7"><path d="M0 1h9M1 3h7L4.500 7z" fill="#333" stroke="#333"/></svg></button></div>
      <div class="name"><span>Autodesk 3ds Max 2016</span><span>无标题</span></div>
      <div class="bar info"><input aria-label="search">${this.t("binoc", "", 20)}${this.t("dish", "", 20)}${this.t("star", "", 20)}${this.t("user", "", 20)}<button class="login">登录</button>${smallCaret}<span class="s4"></span>
        ${this.t("exch", "", 20)}<span class="s12"></span><button aria-label="help"><span class="help">?</span></button><button class="last" aria-label="help list">${smallCaret}</button></div>
      <div class="win">
        <button aria-label="minimize"><svg width="11" height="11"><path d="M0 5.500h11" stroke="#000"/></svg></button>
        <button aria-label="maximize"><svg width="11" height="11"><path d="M.5 .5h10v10H.5z" fill="none" stroke="#000"/></svg></button>
        <button aria-label="close"><svg width="11" height="11"><path d="M0 0l11 11M11 0L0 11" stroke="#000"/></svg></button></div>
    </header>`;
  }
  menuBar() {
    const m = ["编辑(E)", "工具(T)", "组(G)", "视图(V)", "创建(C)", "修改器", "动画", "图形编辑器", "渲染(R)", "自定义(U)", "MAXScript(M)", "帮助(H)"];
    return html`<nav class="menu">${m.map(x => html`<button class=${x.includes("(") ? "" : "n"}>${x}</button>`)}</nav>`;
  }
  toolBar() {
    const s = html`<span class="sep"></span>`;
    const g = (...n: string[]) => n.map(x => this.t(x));
    return html`<div class="tools"><div class="strip"><span class="grip"></span>
      ${g("undo", "redo")}${s}${g("link", "unlink", "bind")}${s}${this.dd("选择过滤器", "全部")}${this.t("selobj", "act")}${g("byname", "rect", "windowc")}${s}
      ${g("move", "rotate", "scale", "place")}${this.dd("参考坐标系", "视图")}${g("pivot")}${s}${g("manip")}${this.t("kbd", "act")}${s}${g("snap", "angle", "percent", "spin")}${s}
      <span class="gap"></span>${g("mirror", "align")}${s}${g("list", "layers")}${s}${this.t("ribbon", "act")}${g("curve", "schem")}${s}${g("material")}${s}${g("rsetup", "rframe", "render", "cloud", "gallery")}
    </div></div>`;
  }
  ribbon() {
    const lab = (n: string, t: string) => html`<button class="row txt">${ico(n, 20)}<span>${t}</span></button>`;
    return html`<section class="ribbon"><span class="rgrip"></span><div class="rmain">
      <div class="tabs"><button class="cur">建模</button><button>自由形式</button><button>选择</button><button>对象绘制</button><button>填充</button><button class="mini" aria-label="minimize ribbon"><svg width="5" height="3"><path d="M0 3h5L2.500 0z"/></svg></button><button class="drop" aria-label="ribbon options">${smallCaret}</button></div>
      <div class="panels">
        <div class="pan p1"><div class="pb">
          <div class="col"><div class="row">${this.b("vert", "w30", "act")}${this.b("edge")}${this.b("border")}${this.b("poly")}${this.b("elem")}</div>
            <div class="row cc">可编辑多边形</div>
            <div class="row">${this.b("cubecur", "w25", "act")}${this.b("cubey", "w25")}${this.b("cubeo", "w25")}<span class="s4"></span>${this.b("wire", "w25")}<span class="s4"></span>${this.b("soft", "w40")}</div></div>
          <span class="vs"></span>
          <div class="col cc">${this.b("stk1", "w25", "off")}${this.b("stk2", "w25", "off")}</div><span class="s4"></span>
          <div class="col">${this.b("bulb", "w25", "act")}${this.b("pin", "w25")}${this.b("tube", "w25")}</div>
        </div><div class="pf">多边形建模 ${caret}</div></div>

        <div class="pan p2"><div class="pb">
          <div class="col cc grs">${lab("grow", "扩大")}${lab("shrink", "收缩")}</div>
          <div class="col"><div class="row loop">${ico("dash")}<span>Loop</span>${smallCaret}</div>
            <div class="row">${this.b("plus", "w34")}${this.b("minus", "w34")}</div><div class="row">${this.b("dashbolt", "w31")}${this.b("dash", "w24")}<button class="b w13" aria-label="more">${smallCaret}</button></div></div>
          <span class="vs vs2"></span>
          <div class="col"><div class="row tl8">${ico("ring")}光环</div><div class="row">${this.b("plusd", "w31", "off")}${this.b("minusd", "w31", "off")}</div><div class="row">${this.b("ringbolt", "w31")}${this.b("lines", "w31", "off")}</div></div>
        </div><div class="pf">修改选择 ${caret}</div></div>

        <div class="pan p3"><div class="pb">
          <div class="col iter"><div class="row">${this.b("gridlock", "w24")}<button class="b w13" aria-label="more">${smallCaret}</button></div><div class="row">${this.b("gridpaint", "w36")}</div><div class="spin"><input aria-label="迭代" value="1">${this.spinArrows()}</div></div>
          <span class="vs"></span>
          <div class="col"><div class="row">${lab("repeat", "重复")}<span class="s16"></span>${lab("qslice", "快速切片")}<span class="s20"></span>${lab("swift", "快速 循环")}</div>
            <div class="row">${lab("nurms", "NURMS")}<span class="s20"></span>${lab("cut", "剪切")}<span class="s30"></span>${lab("gridpaint", "绘制连接")}<span class="s6"></span>${smallCaret}</div>
            <div class="row"><span class="cons">约束:</span>${this.b("c1", "w27", "act")}${this.b("c2", "w27")}${this.b("c3", "w27")}${this.b("c4", "w27")}</div></div>
        </div><div class="pf">编辑</div></div>

        <div class="pan p4"><div class="pb"><div class="col cc p4c">${lab("gconn", "连接")}${lab("gdist", "距离")}</div>
          <div class="col p4r"><div class="row">${smallCaret}<span class="s16"></span>${lab("create", "创建")}</div><div class="row">${smallCaret}<span class="s16"></span>${lab("collapse", "塌陷")}</div></div></div><div class="pf"></div></div>
        ${[["bigvert", "顶点"], ["bigtess", "细分"], ["bigvis", "可见性"], ["bigalign", "对齐"], ["bigprop", "属性"]].map(([n, t]) => html`<button class="big">${ico(n, 32)}<span>${t}</span><span class="car">${caret}</span></button>`)}
      </div></div></section>`;
  }
  side() {
    const s = ["渲染", "文件", "编辑", "选择", "显示", "变换", "动画", "模型", "室内", "室外", "图形", "材质", "灯光", "相机", "修改", "实用", "其它", "素材"];
    return html`<nav class="side"><button class="logo" aria-label="home"><svg width="34" height="34" viewBox="0 0 34 34"><circle cx="17" cy="17" r="16" fill="#858585"/><path d="M8 10l9-2 9 2-9 4zM8 12l8 4v11l-7-5zM26 12l-8 4v11l7-5z" fill="#fff"/></svg></button>
      <button class="ver">RDF3</button>${s.map(x => html`<button>${x}</button>`)}
      <button class="gear" aria-label="settings"><svg width="28" height="28" viewBox="0 0 28 28"><circle cx="14" cy="14" r="13" fill="none" stroke="#8d8d94" stroke-width="2"/><path d="M14 7v14M8 10.500l12 7M20 10.500l-12 7" stroke="#9a9aa0" stroke-width="3"/><circle cx="14" cy="14" r="4" fill="#9a9aa0"/><circle cx="14" cy="14" r="1.500" fill="#444"/></svg></button></nav>`;
  }
  viewport() {
    const red = [[165, 404], [197, 443], [230, 483], [265, 525], [731, 404], [699, 443], [665, 483], [630, 525]];
    const blue = [[130, 362], [130, 459], [765, 362], [765, 459], [423, 746], [448, 746], [472, 746]];
    return html`<div class="vp"><div class="vlabel"><span>[+]</span><span>[前 ]</span><span>[明暗处理 + 边面 ]</span></div>
      <svg class="scene" width="1400" height="1000" viewBox="50 214 1400 1000">
        <g shape-rendering="crispEdges"><path d="M130.500 328.500h635v418h-635z" fill="#787878" stroke="#000"/>
        <path d="M448.500 328v136h134" fill="none" stroke="#b3262b"/></g>
        <path d="M165 404L284 328M197 443L328 328M230 483L370 328M265 525L408 328M731 404L612 328M699 443L568 328M665 483L526 328M630 525L488 328M130 554L394 746M130 642L347 746M765 554L502 746M765 642L549 746" stroke="#000" fill="none"/>
        <path d="M423 746L130.500 459V362L448 746 765.500 362v97L472 746M423 746.500h49" fill="none" stroke="#fff"/>
        ${blue.map(p => svg`<rect x=${p[0] - 4} y=${p[1] - 4} width="8" height="8" fill="#5550e8"/>`)}
        ${red.map(p => svg`<rect x=${p[0] - 4} y=${p[1] - 4} width="8" height="8" fill="#c80000"/>`)}
        <g class="axis" fill="#b3262b"><text x="448" y="329">y</text><text x="580" y="464">x</text><text x="449" y="463" fill="#8a4a4a">z</text></g>
        <g shape-rendering="crispEdges"><path d="M74.500 879v24" stroke="#1414a8"/><path d="M78 902.500h21" stroke="#981414" stroke-width="2"/></g>
        <g class="axis"><text x="75" y="876" fill="#1a1ab4">z</text><text x="75" y="901" fill="#1a8c1a">y</text><text x="99" y="902" fill="#8c1414">x</text></g>
      </svg>
      <svg class="ringv" width="80" height="14" viewBox="0 0 80 14"><path d="M4 6q8-2 20-3M56 3q13 1 20 3M1 7q38 8 78 0" fill="none" stroke="#999" stroke-width="1.500"/></svg>
      <div class="cube">前</div></div>`;
  }
  timeline() {
    const n = Array.from({ length: 101 }, (_, i) => i);
    return html`<div class="slider"><button>&lt;</button><button class="thumb">0 / 100</button><button>&gt;</button></div>
      <div class="track"><button class="tc" aria-label="mini curve editor">${ico("curves")}</button>
      <div class="ruler"><svg><rect x="-4" y="2" width="8" height="23" fill="#8c8420"/>${n.map(i => svg`<line x1="${i}%" x2="${i}%" y1="0" y2=${i % 5 ? 12 : 25} stroke="#777" shape-rendering="crispEdges"/>`)}
        ${n.filter(i => i % 5 === 0).map(i => svg`<text class=${i ? "tk" : "tk now"} x="${i}%" y="23" stroke="#292929" stroke-width="2" paint-order="stroke">${i}</text>`)}</svg></div></div>`;
  }
  command() {
    const dots = html`<svg class="ico" width="16" height="14" viewBox="0 0 16 14"><path d="M0 8h3M1.500 6.500v3M6 12h3M7.500 10.500v3M11 2h3M12.500 .5v3" stroke="#000"/></svg>`;
    return html`<aside class="cmd">
      <div class="ctabs">${["sun", "arc", "hier", "motion", "display", "hammer"].map((x, i) => this.t(x, i === 1 ? "cur" : "", 22))}</div>
      <div class="nm"><input class="fld" aria-label="名称" value="对象001"><button class="sw" aria-label="颜色"></button></div>
      <div class="mods"><select aria-label="修改器列表"><option>修改器列表</option></select><span class="btn">${chev}</span></div>
      <div class="stack"><button><span class="ex">-</span>可编辑多边形${dots}</button>
        ${["顶点", "边", "边界", "多边形", "元素"].map((x, i) => html`<button class=${classMap({ sel: i === 0, end: i === 4 })}><span class="dots"></span>${x}${i ? nothing : dots}</button>`)}</div>
      <div class="sbtn">${this.t("mpin")}<span class="sep"></span>${this.t("mtube")}<span class="sep"></span>${this.t("unique")}${this.t("trash")}<span class="sep"></span>${this.t("config")}</div>
      <div class="hr"></div>
      <div class="roll"><div class="rc">
        <button class="rh"><b>-</b>选择</button>
        <div class="rb s1">
          <div class="subs">${this.t("yv", "y")}${this.t("redge")}${this.t("rborder")}${this.t("rpoly")}${this.t("relem")}</div>
          <div class="ck dis"><label><input type="checkbox" disabled>按顶点</label></div>
          <div class="ck"><label><input type="checkbox">忽略背面</label></div>
          <div class="ck dis"><label><input type="checkbox" disabled>按角度:</label><span class="grow"></span><input class="fld num" aria-label="角度" value="45.0" disabled>${this.spinArrows()}</div>
          <div class="two"><span><button class="k">收缩</button></span><span><button class="k">扩大</button></span>
            <span class="dis"><button class="k">环形</button>${this.spinArrows()}</span><span class="dis"><button class="k">循环</button>${this.spinArrows()}</span></div>
          <fieldset><legend>预览选择</legend><div class="rad"><label><input type="radio" name="pv" checked>禁用</label><label><input type="radio" name="pv">子对象</label><label><input type="radio" name="pv">多个</label></div></fieldset>
          <div class="count">选择了 8 个顶点</div>
        </div>
        <button class="rh"><b>+</b>软选择</button><div class="rgap"></div>
        <button class="rh"><b>-</b>编辑顶点</button>
        <div class="rb s2"><div class="two"><button class="k">移除</button><button class="k">断开</button>
          <span><button class="k">挤出</button><button class="k sq" aria-label="挤出设置"><i></i></button></span><span><button class="k">焊接</button><button class="k sq" aria-label="焊接设置"><i></i></button></span>
          <span><button class="k">切角</button><button class="k sq" aria-label="切角设置"><i></i></button></span><button class="k">目标焊接</button>
          <span class="full"><button class="k mid">连接</button></span><button class="k full">移除孤立顶点</button><button class="k full">移除未使用的贴图顶点</button></div>
          <div class="wbox"><div class="row"><label for="wt">权重:</label><input id="wt" class="fld" value="1.0">${this.spinArrows()}</div><div class="row"><label for="cr">折缝:</label><input id="cr" class="fld" value="0.0">${this.spinArrows()}</div></div>
        </div>
      </div><span class="sb"></span></div><div class="foot"></div></aside>`;
  }
  status() {
    return html`<footer class="status">
      <div class="two-r lis"><input class="pink" aria-label="macro"><input aria-label="listener" value="ok!"></div>
      <div class="two-r grow"><div class="row"><span class="sbx">选择了 1 个 对象</span><span class="ics">${this.t("rpin", "", 20)}${this.t("lock", "", 20)}${this.t("absrel", "", 20)}</span>
          <span class="xyz"><label>X:<input class="fld" value="113.299mm"></label><label>Y:<input class="fld" value="-0.0mm"></label><label>Z:<input class="fld" value="52.066mm"></label></span></div>
        <div class="row"><span class="sbx">单击或单击并拖动以选择对象</span><button class="actb" aria-label="adaptive">${ico("adapt", 20)}</button></div></div>
      <div class="two-r gr"><span class="sbx">栅格 = 10.0mm</span><span class="sbx">添加时间标记</span></div>
      <button class="kb bigkey" aria-label="设置关键点">${ico("key")}</button>
      <div class="two-r auto"><button class="kb">自动关键点</button><button class="kb">设置关键点</button></div>
      <div class="two-r filt">${this.dd("关键点选择", "选定对象")}<div class="row">${this.t("tangent", "", 22)}<button class="kb">关键点过滤器...</button></div></div>
      <div class="two-r play"><div class="row">${this.t("first")}<span class="sep"></span>${this.t("prev")}${this.t("play")}${this.t("next")}<span class="sep"></span>${this.t("last")}<span class="s4"></span>${["zoom", "zoomall", "extents", "extall"].map(x => this.t(x, "nv", 20))}</div>
        <div class="row">${this.t("keymode")}<input class="fld" aria-label="帧" value="0">${this.spinArrows()}<span class="sep"></span>${this.t("timecfg", "nx", 20)}${this.t("region", "nx", 20)}${["hand", "orbit", "maxvp"].map(x => this.t(x, "nv", 20))}</div></div>
    </footer>`;
  }
  render() {
    return html`<div class="window">${this.titleBar()}${this.menuBar()}${this.toolBar()}${this.ribbon()}
      <main class="body">${this.side()}<div class="center">${this.viewport()}${this.timeline()}</div>${this.command()}</main>${this.status()}</div>
      <button class="app" aria-label="application menu"><svg width="39" height="39" viewBox="0 0 39 39"><path d="M6 4l12-1 7 5-3 5 4 4-4 8-8 3-8-2 8-6-8-3 7-5-7-3z" fill="#0f9da0"/><path d="M6 4l12-1 1 6-6 3z" fill="#35c8c4"/><path d="M13 13l9-1 4 4-10 4z" fill="#2bb5b3"/><path d="M16 20l10-4-4 9-8 3z" fill="#0b6e74"/><path d="M30 17h7l-3.500 4z" fill="#333"/><text class="max" x="11" y="37">MAX</text></svg></button>
      <quad-menu></quad-menu>
      <svg class="over" width="1480" height="600" viewBox="0 0 1480 600"><g fill="#fb3a36"><path d="M624 544L793 466l-2-5 28 3-21 19-2-7z"/><path d="M1235 466l53-110-6-3 21-10v27l-6-4z"/></g>
        <g fill="none" stroke="#fb3a36" stroke-width="7"><path d="M830.500 446.500h163v28h-163zM1320.500 311.500h64v27h-64z"/></g></svg>`;
  }
}
